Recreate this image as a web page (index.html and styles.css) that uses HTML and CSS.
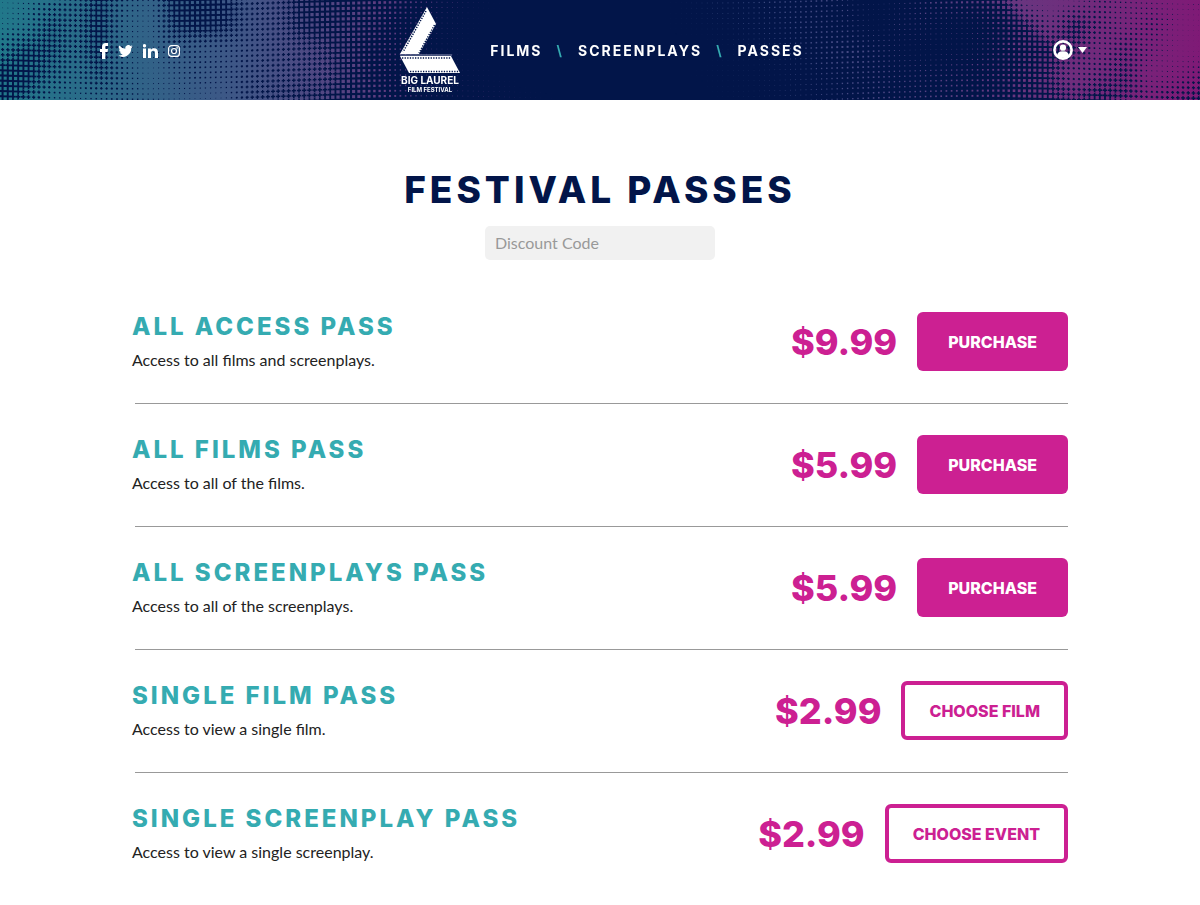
FILE: index.html
```html
<!DOCTYPE html>
<html lang="en">

<head>
    <meta charset="UTF-8">
    <meta name="viewport" content="width=device-width, initial-scale=1.0">
    <title>Festival Passes - Big Laurel Film Festival</title>
    <link rel="stylesheet" href="styles.css">
</head>

<body>
    <header class="header">
        <canvas class="header-dots" id="headerDots"></canvas>
        <div class="social">
            <a href="#" aria-label="Facebook">
                <svg width="8" height="16" viewBox="0 0 8 16"><path d="M2 16V9H0V6h2V4C2 1.400 3.400 0 5.800 0H8v3H6.500C5.700 3 5.300 3.300 5.300 4v2H8l-.4 3H5.300v7z"/></svg>
            </a>
            <a href="#" aria-label="Twitter">
                <svg width="15" height="12" viewBox="0 0 24 20"><path d="M24 2.400a10 10 0 0 1-2.800.8A5 5 0 0 0 23.300.5a10 10 0 0 1-3.100 1.200 4.900 4.900 0 0 0-8.400 4.500A14 14 0 0 1 1.700 1a4.900 4.900 0 0 0 1.500 6.600 5 5 0 0 1-2.200-.6 4.900 4.900 0 0 0 3.900 4.900 5 5 0 0 1-2.200.1 4.900 4.900 0 0 0 4.600 3.400A9.900 9.900 0 0 1 0 17.500a14 14 0 0 0 21.500-12.400A10 10 0 0 0 24 2.400z"/></svg>
            </a>
            <a href="#" aria-label="LinkedIn">
                <svg width="15" height="14" viewBox="0 0 15 14"><path d="M0 4.500h3V14H0zM1.500 0a1.700 1.700 0 1 1 0 3.400 1.700 1.700 0 0 1 0-3.400zM5 4.500h2.900v1.300C8.400 4.900 9.400 4.200 11 4.200c3 0 4 1.900 4 4.700V14h-3V9.300c0-1.300-.2-2.500-1.800-2.500S8 8 8 9.300V14H5z"/></svg>
            </a>
            <a href="#" aria-label="Instagram">
                <svg width="12" height="12" viewBox="0 0 12 12"><rect class="line" x=".6" y=".6" width="10.800" height="10.800" rx="3"/><circle class="line" cx="6" cy="6" r="2.500"/><circle cx="9.100" cy="2.900" r=".8"/></svg>
            </a>
        </div>

        <div class="header-center">
            <a href="#" class="logo" aria-label="Big Laurel Film Festival">
                <svg width="62" height="87" viewBox="0 0 62 87">
                    <path d="M28 0l9 17-17 30H1z"/>
                    <path d="M1 49h51l9 17H10z"/>
                    <path class="holes" d="M27 4L4 45M35.500 18L20 46M3 51h49M11 64.500h49"/>
                    <path class="edge" d="M1 48h52"/>
                    <text class="logo-name" x="31" y="77">BIG LAUREL</text>
                    <text class="logo-sub" x="31" y="85">FILM FESTIVAL</text>
                </svg>
            </a>
            <nav class="nav">
                <a href="#">FILMS</a>
                <span class="slash">\</span>
                <a href="#">SCREENPLAYS</a>
                <span class="slash">\</span>
                <a href="#">PASSES</a>
            </nav>
        </div>

        <button class="account" aria-label="Account">
            <svg width="20" height="20" viewBox="0 0 20 20">
                <circle class="ring" cx="10" cy="10" r="8.600"/>
                <circle cx="10" cy="7.700" r="3.100"/>
                <path d="M4 15.500c.4-2.900 2.300-4.300 6-4.300s5.600 1.400 6 4.300a9 9 0 0 1-12 0z"/>
            </svg>
            <svg width="9" height="6" viewBox="0 0 9 6"><path d="M0 0h9L4.500 6z"/></svg>
        </button>
    </header>

    <main class="passes">
        <h1>FESTIVAL PASSES</h1>
        <input type="text" class="discount" placeholder="Discount Code" aria-label="Discount Code">

        <div class="pass">
            <div class="pass-info">
                <h2>ALL ACCESS PASS</h2>
                <p>Access to all films and screenplays.</p>
            </div>
            <span class="price">$9.99</span>
            <button class="btn">PURCHASE</button>
        </div>
        <div class="pass">
            <div class="pass-info">
                <h2>ALL FILMS PASS</h2>
                <p>Access to all of the films.</p>
            </div>
            <span class="price">$5.99</span>
            <button class="btn">PURCHASE</button>
        </div>
        <div class="pass">
            <div class="pass-info">
                <h2>ALL SCREENPLAYS PASS</h2>
                <p>Access to all of the screenplays.</p>
            </div>
            <span class="price">$5.99</span>
            <button class="btn">PURCHASE</button>
        </div>
        <div class="pass">
            <div class="pass-info">
                <h2>SINGLE FILM PASS</h2>
                <p>Access to view a single film.</p>
            </div>
            <span class="price">$2.99</span>
            <button class="btn btn-outline">CHOOSE FILM</button>
        </div>
        <div class="pass">
            <div class="pass-info">
                <h2>SINGLE SCREENPLAY PASS</h2>
                <p>Access to view a single screenplay.</p>
            </div>
            <span class="price">$2.99</span>
            <button class="btn btn-outline">CHOOSE EVENT</button>
        </div>
    </main>

    <script src="dots.js"></script>
</body>

</html>
```
FILE: styles.css
```css
* {
    margin: 0;
    padding: 0;
    box-sizing: border-box;
}

body {
    font-family: Lato, sans-serif;
    font-size: 16px;
    color: #222;
    background-color: #fff;
}

a {
    color: inherit;
    text-decoration: none;
}

button {
    font-family: Inter, sans-serif;
    border: none;
    cursor: pointer;
}

svg {
    display: block;
    fill: #fff;
}

/* header */
.header {
    position: relative;
    display: grid;
    grid-template-columns: 1fr auto 1fr;
    align-items: center;
    height: 100px;
    padding: 0 100px;
    color: #fff;
    background-color: #021549;
}

.header-dots {
    position: absolute;
    top: 0;
    left: 0;
    width: 100%;
    height: 100%;
}

.social,
.header-center,
.account {
    position: relative;
}

.social {
    display: flex;
    align-items: center;
    gap: 10px;
    padding-top: 2px;
}

.line {
    fill: none;
    stroke: #fff;
    stroke-width: 1.2;
}

.header-center {
    display: flex;
    align-items: center;
    gap: 29px;
    padding-left: 3px;
}

.holes {
    fill: none;
    stroke: #021549;
    stroke-width: 1.5;
    stroke-dasharray: 1.3 1.3;
}

.edge {
    fill: none;
    stroke: #8d95b5;
    stroke-width: 1;
}

.logo-name,
.logo-sub {
    font-family: Inter, sans-serif;
    font-weight: 700;
    text-anchor: middle;
}

.logo-name {
    font-size: 10px;
}

.logo-sub {
    font-size: 6px;
}

.nav {
    display: flex;
    align-items: center;
    gap: 14px;
    font-family: Inter, sans-serif;
    font-size: 14px;
    font-weight: 700;
    letter-spacing: 2px;
}

.slash {
    color: #35abb1;
}

.account {
    display: flex;
    align-items: center;
    justify-self: end;
    gap: 5px;
    padding-right: 13px;
    background: none;
}

.ring {
    fill: none;
    stroke: #fff;
    stroke-width: 2.6;
}

/* passes */
.passes {
    width: 78%;
    margin: 0 auto;
    padding-top: 68px;
}

h1 {
    font-family: Inter, sans-serif;
    font-size: 37px;
    font-weight: 800;
    line-height: 44px;
    letter-spacing: 4px;
    text-align: center;
    color: #021549;
}

.discount {
    display: block;
    width: 230px;
    height: 34px;
    margin: 14px auto 21px;
    padding: 0 10px 2px;
    font-family: Lato, sans-serif;
    font-size: 16px;
    border: none;
    border-radius: 5px;
    background-color: #f1f1f1;
}

.discount::placeholder {
    color: #999;
}

.pass {
    display: flex;
    align-items: center;
    margin-left: 3px;
    padding: 31px 0 32px;
    border-bottom: 1px solid #999;
}

.pass:last-child {
    border-bottom: none;
}

.pass-info {
    flex: 1;
    margin-left: -3px;
}

h2 {
    font-family: Inter, sans-serif;
    font-size: 24px;
    font-weight: 800;
    line-height: 30px;
    letter-spacing: 3px;
    color: #35abb1;
}

.pass-info p {
    line-height: 22px;
    margin-top: 7px;
}

.price {
    margin-right: 20px;
    font-family: Inter, sans-serif;
    font-size: 36px;
    font-weight: 800;
    line-height: 44px;
    color: #cc2092;
}

.btn {
    height: 59px;
    padding: 0 31px;
    font-size: 16px;
    font-weight: 800;
    color: #fff;
    background-color: #cc2092;
    border-radius: 6px;
}

.btn-outline {
    padding: 0 24px;
    color: #cc2092;
    background-color: #fff;
    border: 4px solid #cc2092;
}
```
FILE: dots.js
```js
const canvas = document.getElementById("headerDots");
const ctx = canvas.getContext("2d");

// dot size (0-100), one column every 1/48 of the width, rows from top to bottom
const sizes = [
    [95, 92, 85, 80, 65, 85, 92, 60, 55, 62, 80, 78, 65, 60, 55, 55, 45, 25, 15, 10, 5, 0, 0, 0, 0, 0, 0, 5, 12, 18, 20, 28, 28, 30, 20, 10, 15, 30, 40, 45, 60, 98, 100, 96, 88, 90, 92, 94, 94],
    [94, 88, 70, 78, 62, 90, 94, 66, 60, 66, 82, 78, 65, 60, 60, 50, 30, 18, 12, 5, 0, 0, 0, 0, 0, 0, 0, 5, 8, 12, 18, 22, 30, 30, 25, 8, 20, 22, 15, 18, 40, 65, 88, 65, 82, 90, 84, 94, 97],
    [80, 66, 68, 80, 64, 90, 95, 82, 88, 88, 84, 80, 76, 70, 60, 40, 28, 15, 10, 5, 0, 0, 0, 0, 0, 0, 0, 0, 0, 5, 10, 15, 22, 35, 40, 30, 15, 10, 12, 18, 35, 50, 62, 72, 92, 76, 88, 96, 98],
    [58, 62, 74, 86, 72, 86, 95, 90, 86, 88, 82, 78, 76, 74, 62, 42, 25, 16, 12, 8, 5, 0, 0, 0, 0, 0, 0, 0, 5, 8, 8, 10, 15, 25, 30, 32, 25, 25, 28, 30, 38, 52, 68, 90, 80, 72, 94, 92, 84],
    [60, 72, 90, 93, 90, 88, 91, 93, 95, 94, 76, 70, 68, 66, 60, 50, 35, 22, 16, 14, 12, 8, 5, 0, 0, 0, 0, 0, 0, 5, 8, 12, 15, 18, 25, 30, 28, 30, 35, 38, 46, 58, 66, 70, 62, 72, 82, 74, 68]
];

function sizeAt(x, y) {
    const col = Math.min(x * 48, 47.99);
    const row = Math.min(y * 4, 3.99);
    const c = Math.floor(col), r = Math.floor(row);
    const fx = col - c, fy = row - r;
    const top = sizes[r][c] * (1 - fx) + sizes[r][c + 1] * fx;
    const bottom = sizes[r + 1][c] * (1 - fx) + sizes[r + 1][c + 1] * fx;
    return (top * (1 - fy) + bottom * fy) / 100;
}

function drawDots() {
    const w = canvas.width = canvas.clientWidth;
    const h = canvas.height = canvas.clientHeight;
    const step = 5.2;

    const color = ctx.createLinearGradient(0, 0, w, 0);
    color.addColorStop(0, "#21788a");
    color.addColorStop(0.1, "#2e6688");
    color.addColorStop(0.2, "#3f5686");
    color.addColorStop(0.32, "#5f3c80");
    color.addColorStop(0.45, "#3a2a6c");
    color.addColorStop(0.6, "#34477c");
    color.addColorStop(0.72, "#484a84");
    color.addColorStop(0.85, "#69357f");
    color.addColorStop(1, "#7f1a76");
    ctx.fillStyle = color;

    for (let i = 0; i * step < w + step; i++) {
        for (let j = -2; j * step < h + 2 * step; j++) {
            const x = i * step;
            const y = j * step + 3 * Math.sin(x / 90);
            const s = sizeAt(x / w, Math.min(Math.max(y / h, 0), 1));
            if (s < 0.03) continue;
            const side = Math.min(s, 0.76) * step;
            ctx.fillRect(x - side / 2, y - side / 2, side, side);
            if (s > 0.66) {
                // big dots grow into each other and leave small gaps at the corners
                const long = step + 0.8;
                const bar = (s - 0.66) / 0.34 * step;
                ctx.fillRect(x - long / 2, y - bar / 2, long, bar);
                ctx.fillRect(x - bar / 2, y - long / 2, bar, long);
            }
        }
    }
}

drawDots();
window.addEventListener("resize", drawDots);
```
